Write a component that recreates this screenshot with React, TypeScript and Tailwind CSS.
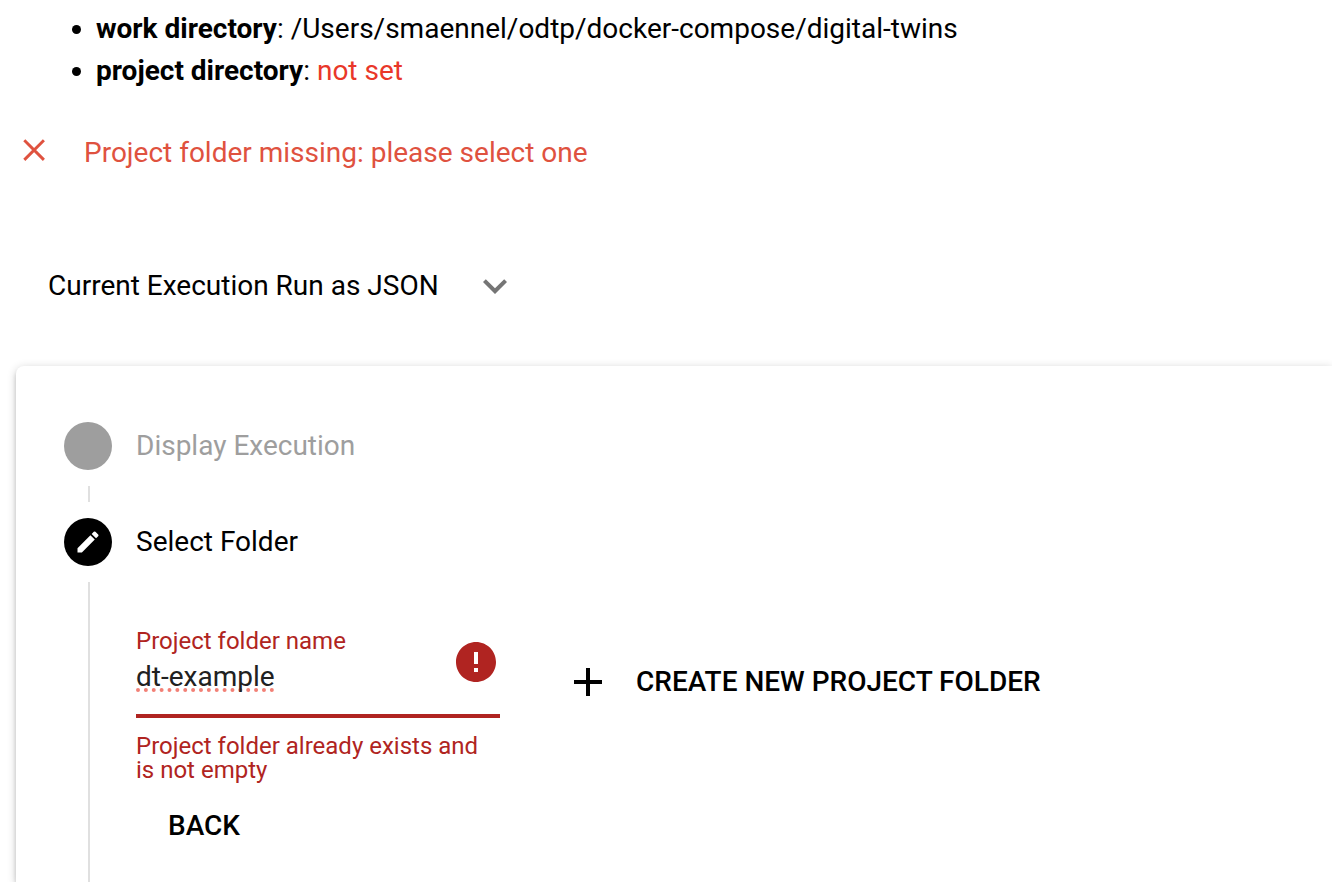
import { useState } from 'react';
import type { ReactNode } from 'react';
import { MdAdd, MdEdit, MdError, MdKeyboardArrowDown } from 'react-icons/md';

type StepProps = {
  label: string;
  active?: boolean;
  last?: boolean;
  children?: ReactNode;
};

function Step({ label, active = false, last = false, children }: StepProps) {
  return (
    <li className={last ? 'flex flex-1 gap-6' : 'flex gap-6'} aria-current={active ? 'step' : undefined}>
      <div className="flex w-12 shrink-0 flex-col">
        <div
          className={
            active
              ? 'flex size-12 items-center justify-center rounded-full bg-black text-white'
              : 'size-12 rounded-full bg-[#9e9e9e]'
          }
        >
          {active && <MdEdit className="size-7" aria-hidden="true" />}
        </div>
        <div className={last ? 'ml-6 mt-4 w-0.5 flex-1 bg-[#e0e0e0]' : 'my-4 ml-6 h-4 w-0.5 bg-[#e0e0e0]'} />
      </div>
      <div className="min-w-0 flex-1">
        <h2 className={active ? 'leading-[48px] text-black' : 'leading-[48px] text-[#9e9e9e]'}>{label}</h2>
        {children}
      </div>
    </li>
  );
}

export default function App() {
  const [folder, setFolder] = useState('dt-example');

  return (
    <main className="flex min-h-screen flex-col bg-white pl-4 pt-2 font-['Roboto',sans-serif] text-[28px] leading-[42px] text-black">
      <ul className="list-disc pl-20">
        <li>
          <strong className="font-bold">work directory</strong>: /Users/smaennel/odtp/docker-compose/digital-twins
        </li>
        <li>
          <strong className="font-bold">project directory</strong>: <span className="text-[#e93729]">not set</span>
        </li>
      </ul>

      <div className="mt-10 flex gap-8 text-[#df523f]" role="alert">
        <svg className="size-9 shrink-0" viewBox="0 0 36 36" fill="none" stroke="currentColor" strokeWidth="2.9" aria-hidden="true">
          <path d="M8.3 8.3 27.9 27.9M27.9 8.3 8.3 27.9" />
        </svg>
        <p>Project folder missing: please select one</p>
      </div>

      <button type="button" className="mt-16 flex h-24 items-center gap-8 self-start px-8" aria-expanded="false">
        Current Execution Run as JSON
        <MdKeyboardArrowDown className="size-12 text-[#757575]" aria-hidden="true" />
      </button>

      <section className="mt-8 flex flex-1 flex-col rounded-tl-lg bg-white pl-12 pt-14 shadow-[0_2px_10px_rgba(0,0,0,0.2),0_4px_4px_rgba(0,0,0,0.14),0_6px_2px_-4px_rgba(0,0,0,0.12)]">
        <ol className="flex flex-1 flex-col">
          <Step label="Display Execution" />
          <Step label="Select Folder" active last>
            <div className="mt-10 flex items-start gap-8">
              <div className="w-[364px]">
                <div className="flex h-28 items-center border-b-4 border-[#b02421] pt-1">
                  <div className="flex min-w-0 flex-1 flex-col">
                    <label htmlFor="folder" className="text-2xl leading-[30px] text-[#b02421]">
                      Project folder name
                    </label>
                    <input
                      id="folder"
                      type="text"
                      value={folder}
                      onChange={(event) => setFolder(event.target.value)}
                      spellCheck={false}
                      aria-invalid="true"
                      aria-describedby="folder-error"
                      className="h-[42px] w-full text-[#212121] underline decoration-[#f28076] decoration-dotted decoration-4 underline-offset-2 outline-none [text-decoration-skip-ink:none]"
                    />
                  </div>
                  <MdError className="size-12 shrink-0 text-[#b02421]" aria-hidden="true" />
                </div>
                <p id="folder-error" className="pt-4 text-2xl leading-6 text-[#b02421]">
                  Project folder already exists and is not empty
                </p>
              </div>
              <button type="button" className="mt-10 flex h-18 items-center gap-6 px-8 font-medium">
                <MdAdd className="size-12" aria-hidden="true" />
                CREATE NEW PROJECT FOLDER
              </button>
            </div>
            <button type="button" className="mt-2 h-18 px-8 font-medium">
              BACK
            </button>
          </Step>
        </ol>
      </section>
    </main>
  );
}
